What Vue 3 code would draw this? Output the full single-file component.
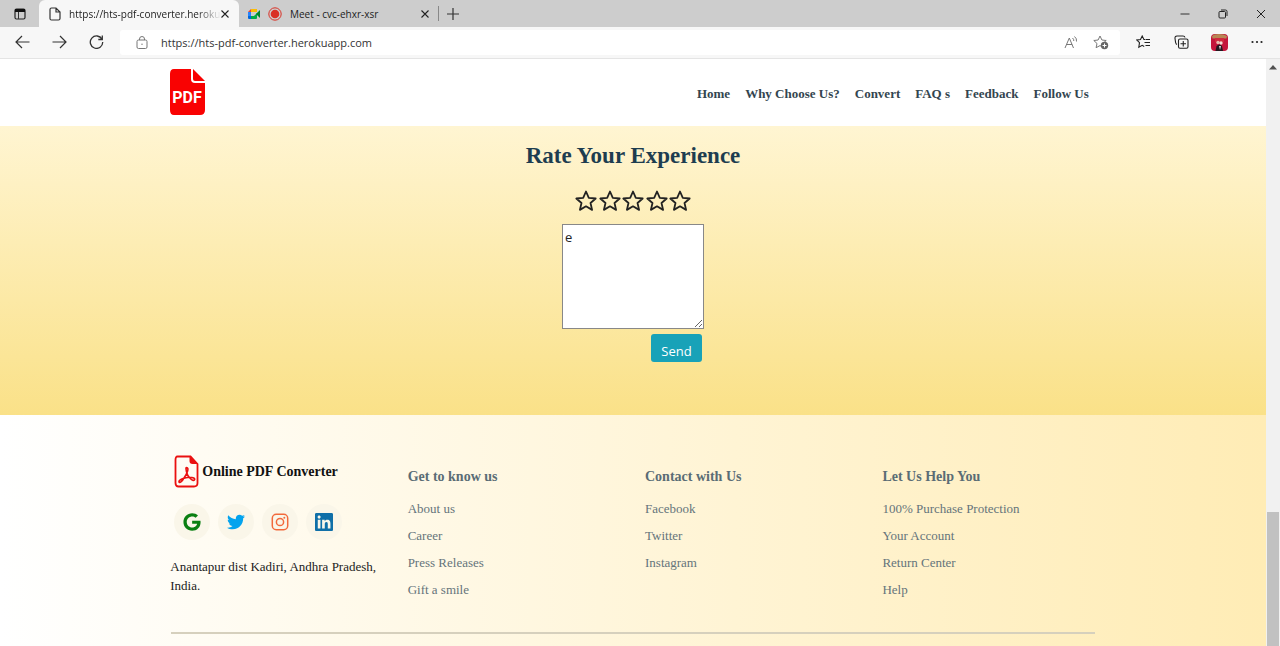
<script setup>
import { ref } from 'vue'

const address = ref('https://hts-pdf-converter.herokuapp.com')
const comment = ref('e')
const rating = ref(0)

const navLinks = ['Home', 'Why Choose Us?', 'Convert', 'FAQ s', 'Feedback', 'Follow Us']

const columns = [
  { title: 'Get to know us', links: ['About us', 'Career', 'Press Releases', 'Gift a smile'] },
  { title: 'Contact with Us', links: ['Facebook', 'Twitter', 'Instagram'] },
  { title: 'Let Us Help You', links: ['100% Purchase Protection', 'Your Account', 'Return Center', 'Help'] },
]

const socials = [
  {
    name: 'Google', color: '#0a7f12', box: '0 0 488 512',
    path: 'M488 261.8C488 403.3 391.1 504 248 504 110.8 504 0 393.2 0 256S110.8 8 248 8c66.800 0 123 24.500 166.300 64.900l-67.500 64.900C258.500 52.600 94.300 116.600 94.300 256c0 86.500 69.100 156.600 153.700 156.600 98.200 0 135-70.400 140.800-106.900H248v-85.300h236.100c2.300 12.700 3.900 24.900 3.900 41.400z',
  },
  {
    name: 'Twitter', color: '#03a3ee', box: '0 0 512 512',
    path: 'M459.37 151.716c.325 4.548.325 9.097.325 13.645 0 138.72-105.583 298.558-298.558 298.558-59.452 0-114.680-17.219-161.137-47.106 8.447.974 16.568 1.299 25.340 1.299 49.055 0 94.213-16.568 130.274-44.832-46.132-.975-84.792-31.188-98.112-72.772 6.498.974 12.995 1.624 19.818 1.624 9.421 0 18.843-1.300 27.614-3.573-48.081-9.747-84.143-51.980-84.143-102.985v-1.299c13.969 7.797 30.214 12.670 47.431 13.319-28.264-18.843-46.781-51.005-46.781-87.391 0-19.492 5.197-37.360 14.294-52.954 51.655 63.675 129.300 105.258 216.365 109.807-1.624-7.797-2.599-15.918-2.599-24.040 0-57.828 46.782-104.934 104.934-104.934 30.213 0 57.502 12.670 76.670 33.137 23.715-4.548 46.456-13.320 66.599-25.340-7.798 24.366-24.366 44.833-46.132 57.827 21.117-2.273 41.584-8.122 60.426-16.243-14.292 20.791-32.161 39.308-52.628 54.253z',
  },
  { name: 'Instagram', color: '#f26a3c' },
  {
    name: 'LinkedIn', color: '#0f6fa8', box: '0 32 448 448',
    path: 'M416 32H31.900C14.300 32 0 46.500 0 64.300v383.400C0 465.500 14.300 480 31.900 480H416c17.600 0 32-14.500 32-32.300V64.300c0-17.800-14.400-32.300-32-32.300zM135.400 416H69V202.200h66.500V416zm-33.200-243c-21.300 0-38.500-17.300-38.500-38.500S80.900 96 102.200 96c21.200 0 38.500 17.300 38.500 38.500 0 21.300-17.200 38.500-38.500 38.500zm282.100 243h-66.400V312c0-24.800-.5-56.700-34.500-56.700-34.600 0-39.900 27-39.900 54.900V416h-66.400V202.200h63.700v29.200h.9c8.900-16.800 30.600-34.500 62.900-34.500 67.200 0 79.700 44.300 79.700 101.900V416z',
  },
]
</script>

<template>
  <div class="browser">
    <div class="tabstrip">
      <button class="tab-menu" aria-label="Tab actions">
        <svg width="12" height="12" viewBox="0 0 12 12"><rect x="1" y="1" width="10" height="10" rx="1.500" fill="none" stroke="#222" stroke-width="1.200" /><path d="M1 1h10v3H1z" fill="#111" /><path d="M4.500 4v7" stroke="#333" /></svg>
      </button>
      <div class="tab active">
        <svg width="12" height="14" viewBox="0 0 12 14" fill="none" stroke="#333" stroke-width="1.200"><path d="M2.500 1H7l4 4v6.500q0 1.500-1.500 1.500h-7Q1 13 1 11.500v-9Q1 1 2.500 1zM7 1v4h4" /></svg>
        <span class="tab-title faded">https://hts-pdf-converter.heroku</span>
        <button class="close" aria-label="Close tab"><svg width="8" height="8" viewBox="0 0 8 8"><path d="M.5.5l7 7m0-7l-7 7" stroke="#222" stroke-width="1.100" /></svg></button>
      </div>
      <div class="tab meet">
        <svg width="12" height="10" viewBox="0 0 12 10"><path d="M3 0h6v3H3z" fill="#fbbc04" /><path d="M3 0v3H0z" fill="#ea4335" /><path d="M0 3h3v4H0z" fill="#2684fc" /><path d="M0 7h3v3H1q-1 0-1-1z" fill="#0066da" /><path d="M3 7h3l3-3v5q0 1-1 1H3z" fill="#00ac47" /><path d="M8 5l4-4v8z" fill="#00832d" /></svg>
        <svg width="14" height="14" viewBox="0 0 14 14"><circle cx="7" cy="7" r="6.200" fill="none" stroke="#d93025" /><circle cx="7" cy="7" r="4.300" fill="#d93025" /></svg>
        <span class="tab-title">Meet - cvc-ehxr-xsr</span>
        <button class="close" aria-label="Close tab"><svg width="8" height="8" viewBox="0 0 8 8"><path d="M.5.5l7 7m0-7l-7 7" stroke="#222" stroke-width="1.100" /></svg></button>
      </div>
      <button class="new-tab" aria-label="New tab"><svg width="12" height="12" viewBox="0 0 12 12"><path d="M6 0v12M0 6h12" stroke="#333" stroke-width="1.200" /></svg></button>
      <div class="window-controls">
        <button aria-label="Minimize"><svg width="10" height="10" viewBox="0 0 10 10"><path d="M.5 5h9" stroke="#333" /></svg></button>
        <button aria-label="Restore"><svg width="10" height="10" viewBox="0 0 10 10" fill="none" stroke="#222"><rect x="1" y="2.500" width="6.500" height="6.500" rx="1" /><path d="M3 1h4.500Q9 1 9 2.500V7" /></svg></button>
        <button aria-label="Close"><svg width="10" height="10" viewBox="0 0 10 10"><path d="M1 1l8 8m0-8L1 9" stroke="#222" /></svg></button>
      </div>
    </div>

    <div class="toolbar">
      <div class="history">
        <button aria-label="Back"><svg width="15" height="14" viewBox="0 0 15 14" fill="none" stroke="#333" stroke-width="1.200"><path d="M14.500 7H1m6-6L1 7l6 6" /></svg></button>
        <button aria-label="Forward"><svg width="15" height="14" viewBox="0 0 15 14" fill="none" stroke="#333" stroke-width="1.200"><path d="M.5 7H14M8 1l6 6-6 6" /></svg></button>
        <button aria-label="Refresh"><svg width="15" height="14" viewBox="0 0 15 14" fill="none" stroke="#333" stroke-width="1.300"><path d="M13 4.300A6.200 6.200 0 1 0 13.700 7M13.300.5v4h-4" /></svg></button>
      </div>
      <div class="address">
        <svg width="12" height="13" viewBox="0 0 12 13" fill="none" stroke="#777"><rect x="1" y="4" width="10" height="8.500" rx="1.500" /><path d="M3.500 4V3a2.500 2.500 0 0 1 5 0v1" /><circle cx="6" cy="8.200" r=".7" fill="#777" stroke="none" /></svg>
        <div class="url">
          <input v-model="address" aria-label="Address" spellcheck="false" />
        </div>
        <button aria-label="Read aloud"><svg width="14" height="13" viewBox="0 0 14 13" fill="none" stroke="#777"><path d="M1 12L5.300 2 9.500 12M2.500 8.500h5.600M8.500 2q1.500 1.200 1.300 3M10.500.5q2.500 2 2 5" /></svg></button>
        <button aria-label="Add to favorites"><svg width="16" height="15" viewBox="0 0 16 15"><path d="M7 1l1.900 4 4.300.5-3.200 3 .9 4.200L7 10.600l-3.900 2.100.9-4.200-3.200-3L5.100 5z" fill="none" stroke="#777" /><circle cx="11.500" cy="10.500" r="3.700" fill="#666" /><path d="M11.500 8.500v4m-2-2h4" stroke="#fff" /></svg></button>
      </div>
      <div class="tools">
        <button aria-label="Favorites"><svg width="15" height="14" viewBox="0 0 15 14" fill="none" stroke="#222" stroke-width="1.100"><path d="M9 4.500H7.900L6.200 1 4.500 4.500.8 5l2.700 2.700-.7 4.500 3.400-1.900 2 1.100M9.500 4.500H14M8.500 7.500H14M9.500 10.500H14" /></svg></button>
        <button aria-label="Collections"><svg width="15" height="14" viewBox="0 0 15 14" fill="none" stroke="#222" stroke-width="1.100"><rect x="4.500" y="4" width="9.500" height="9.300" rx="1.500" /><path d="M9.250 6v5.500M6.500 8.700H12M11 2.500Q10.700 1 9 1H3Q.8 1 1 3.500l.6 4Q2 9.300 3 9.500" /></svg></button>
        <button aria-label="Profile"><svg width="17" height="17" viewBox="0 0 17 17"><rect width="17" height="17" rx="4" fill="#c4153b" /><path d="M1 2Q3 0 8 0t8 2l-.5 2.500h-14z" fill="#b88755" /><path d="M4 4h9v4H4z" fill="#d02a3f" /><circle cx="7" cy="8.500" r="1.700" fill="#e8bdaf" /><circle cx="10" cy="9" r="1.700" fill="#f1dfd4" /><path d="M4.500 17l1-5q3-3 5.500 0l1 5z" fill="#241820" /><path d="M8 12l1 4 1-4z" fill="#ddd" /></svg></button>
        <button aria-label="Settings and more"><svg width="12" height="4" viewBox="0 0 12 4" fill="#222"><circle cx="1.500" cy="2" r="1.100" /><circle cx="6" cy="2" r="1.100" /><circle cx="10.500" cy="2" r="1.100" /></svg></button>
      </div>
    </div>

    <div class="viewport">
      <div class="page">
        <header class="site-header">
          <div class="container bar">
            <a href="#" class="logo" aria-label="PDF home">
              <svg width="37" height="48" viewBox="0 0 37 48"><path d="M5 1h17v10q0 4 4 4h10v27q0 5-5 5H5q-4 0-4-5V6q0-5 4-5z" fill="#f90202" /><path d="M24 1l12 12H26q-2 0-2-2z" fill="#f90202" /><text x="18" y="35" text-anchor="middle" class="logo-text">PDF</text></svg>
            </a>
            <nav>
              <a v-for="link in navLinks" :key="link" href="#">{{ link }}</a>
            </nav>
          </div>
        </header>

        <section class="feedback">
          <h1>Rate Your Experience</h1>
          <form @submit.prevent>
            <div class="stars" role="radiogroup" aria-label="Rating">
              <label v-for="n in 5" :key="n" class="star">
                <input v-model="rating" type="radio" name="rating" :value="n" :aria-label="`${n} stars`" />
                <svg width="22" height="22" viewBox="0 0 22 22"><path d="M11 1.500l2.800 6.300 6.900.7-5.200 4.500 1.600 6.900L11 16.300l-6.100 3.600L6.500 13 1.300 8.500l6.900-.7z" :fill="n <= rating ? '#222' : 'none'" stroke="#222" stroke-width="1.800" stroke-linejoin="round" /></svg>
              </label>
            </div>
            <textarea v-model="comment" aria-label="Your feedback" spellcheck="false"></textarea>
            <button type="submit" class="send">Send</button>
          </form>
        </section>

        <footer class="site-footer">
          <div class="container">
            <div class="columns">
              <div class="about">
                <a href="#" class="brand">
                  <svg width="26" height="33" viewBox="0 0 26 33"><path d="M4.500 1.500h13l7 7.500v19q0 3.500-3.500 3.500H5.500Q2.500 31.500 2.500 28V5Q2.500 1.500 4.500 1.500z" fill="none" stroke="#ea1010" stroke-width="1.800" /><path d="M16.500 1l8.500 8h-5.500q-3 0-3-3z" fill="#ea1010" /><path d="M13.500 12.500c3 0 .8 6-2.500 10.500-2 3.500-4.500 5.500-5 4-.6-2.200 6-4.800 10.500-4.800 3.500 0 6 1.200 5 2.600-1.600 2.200-7-3-8-8-.4-2.200-.9-4.300 0-4.300z" fill="none" stroke="#ea1010" stroke-width="1.600" /></svg>
                  <span>Online PDF Converter</span>
                </a>
                <div class="socials">
                  <a v-for="s in socials" :key="s.name" href="#" :aria-label="s.name">
                    <svg v-if="s.path" width="18" height="18" :viewBox="s.box"><path :d="s.path" :fill="s.color" /></svg>
                    <svg v-else width="18" height="18" viewBox="0 0 18 18" fill="none" :stroke="s.color" stroke-width="1.500"><rect x="1.300" y="1.300" width="15.400" height="15.400" rx="4" /><circle cx="9" cy="9" r="3.600" /><circle cx="13.300" cy="4.700" r="1" :fill="s.color" stroke="none" /></svg>
                  </a>
                </div>
                <address>Anantapur dist Kadiri, Andhra Pradesh, India.</address>
              </div>
              <div v-for="col in columns" :key="col.title" class="links">
                <h2>{{ col.title }}</h2>
                <ul>
                  <li v-for="link in col.links" :key="link"><a href="#">{{ link }}</a></li>
                </ul>
              </div>
            </div>
            <hr />
          </div>
        </footer>
      </div>
      <div class="scrollbar" aria-hidden="true">
        <svg width="8" height="5" viewBox="0 0 8 5"><path d="M4 0l4 4.500H0z" fill="#505050" /></svg>
        <div class="thumb"></div>
      </div>
    </div>
  </div>
</template>

<style>
body {
  margin: 0;
  overflow: hidden;
}
</style>

<style scoped>
* {
  box-sizing: border-box;
}
a {
  color: inherit;
  text-decoration: none;
}
svg {
  display: block;
  flex: none;
}
button {
  display: flex;
  align-items: center;
  justify-content: center;
  padding: 0;
  border: 0;
  background: none;
  font: inherit;
}
.browser {
  display: flex;
  flex-direction: column;
  height: 100vh;
  font-family: "Liberation Serif", "Times New Roman", serif;
}
.tabstrip {
  display: flex;
  height: 27px;
  background: #cdcdcd;
  font-family: "Open Sans", "Noto Sans", sans-serif;
  font-size: 10px;
  color: #222;
}
.tab-menu {
  width: 39px;
}
.tab {
  display: flex;
  align-items: center;
  width: 200px;
  padding: 0 9px;
}
.tab.active {
  padding: 0 10px;
  background: #f7f7f7;
  border-radius: 6px 6px 0 0;
}
.active .tab-title {
  padding-left: 8px;
}
.tab.meet {
  gap: 8px;
  margin: 6px 0;
  border-right: 1px solid #888;
}
.tab-title {
  flex: 1;
  white-space: nowrap;
}
.faded {
  mask-image: linear-gradient(to right, #000 85%, transparent);
}
.close {
  width: 8px;
  height: 16px;
}
.new-tab {
  width: 28px;
}
.window-controls {
  display: flex;
  margin-left: auto;
}
.window-controls button {
  width: 38px;
}
.toolbar {
  display: flex;
  align-items: center;
  height: 32px;
  padding-bottom: 1px;
  background: #f7f7f7;
  border-bottom: 1px solid #e4e4e4;
}
.history {
  display: flex;
  width: 120px;
  padding-left: 4px;
}
.history button {
  width: 37px;
  height: 26px;
}
.address {
  display: flex;
  flex: 1;
  align-items: center;
  height: 25px;
  padding: 0 11px 0 16px;
  background: #fff;
  border-radius: 3px;
}
.address button {
  width: 16px;
  height: 24px;
  margin-left: 14px;
}
.url {
  flex: 1;
  padding-left: 13px;
}
.url input {
  display: block;
  width: 100%;
  padding: 0;
  border: 0;
  outline: 0;
  background: none;
  color: #333;
  font-family: "Open Sans", "Noto Sans", sans-serif;
  font-size: 11px;
}
.tools {
  display: flex;
  padding: 0 4px;
}
.tools button {
  width: 38px;
  height: 26px;
}
.viewport {
  display: flex;
  flex: 1;
  min-height: 0;
}
.page {
  display: flex;
  flex: 1;
  flex-direction: column;
  overflow: hidden;
}
.container {
  width: 75%;
  margin: 0 auto;
}
.site-header {
  background: #fff;
}
.bar {
  display: flex;
  align-items: center;
  justify-content: space-between;
  padding: 9px 19px 10px 11px;
}
.logo-text {
  fill: #fff;
  font-family: "Liberation Sans Narrow", "Roboto", sans-serif;
  font-size: 16px;
  font-weight: 700;
}
nav {
  display: flex;
  gap: 15px;
  padding-top: 4px;
  color: #33454f;
  font-size: 13px;
  font-weight: 700;
}
.feedback {
  display: flex;
  flex-direction: column;
  align-items: center;
  padding: 16px 0 53px;
  background: linear-gradient(#fff5d2, #fae188);
}
h1 {
  margin: 0 0 20px;
  color: #1d3d50;
  font-size: 23px;
  line-height: 28px;
}
form {
  display: flex;
  flex-direction: column;
  align-items: center;
}
.stars {
  display: flex;
  justify-content: space-between;
  width: 116px;
  margin-bottom: 12px;
}
.star {
  position: relative;
}
.star input {
  position: absolute;
  inset: 0;
  margin: 0;
  opacity: 0;
}
textarea {
  display: block;
  width: 142px;
  height: 105px;
  margin: 0 0 5px;
  padding: 2px;
  border: 1px solid #888;
  border-radius: 0;
  outline: 0;
  background: #fff;
  color: #222;
  font-family: "Open Sans", "Noto Sans", sans-serif;
  font-size: 13px;
  line-height: 20px;
}
.send {
  align-self: flex-end;
  width: 51px;
  height: 28px;
  margin-right: 2px;
  padding-top: 5px;
  border-radius: 3px;
  background: #18a2b8;
  color: #fff;
  font-family: "Open Sans", "Noto Sans", sans-serif;
  font-size: 13px;
}
.site-footer {
  flex: 1;
  padding-top: 40px;
  background: linear-gradient(to right, #fff, #ffecb5);
}
.columns {
  display: grid;
  grid-template-columns: repeat(4, 1fr);
}
.about,
.links {
  padding: 0 12px;
}
.brand {
  display: flex;
  align-items: center;
  gap: 3px;
  padding-left: 3px;
  color: #111;
  font-size: 14px;
  font-weight: 700;
  line-height: 16px;
}
.socials {
  display: flex;
  gap: 8px;
  margin: 16px 0 17px;
  padding-left: 4px;
}
.socials a {
  display: flex;
  align-items: center;
  justify-content: center;
  width: 36px;
  height: 36px;
  border-radius: 50%;
  background: #faf6e9;
}
address {
  color: #222;
  font-size: 13px;
  font-style: normal;
  line-height: 19px;
}
.links {
  padding-top: 11px;
  color: #65747b;
}
h2 {
  margin: 0 0 8px;
  color: #5a6c75;
  font-size: 14px;
  line-height: 21px;
}
ul {
  margin: 0;
  padding: 0;
  list-style: none;
  font-size: 13px;
  line-height: 27px;
}
hr {
  height: 2px;
  margin: 29px 13px 0;
  border: 0;
  background: #d6d0bd;
}
.scrollbar {
  display: flex;
  flex-direction: column;
  align-items: center;
  width: 14px;
  padding-top: 6px;
  background: #f1f1f1;
}
.thumb {
  width: 12px;
  height: 23%;
  margin-top: auto;
  background: #c1c1c1;
}
</style>
